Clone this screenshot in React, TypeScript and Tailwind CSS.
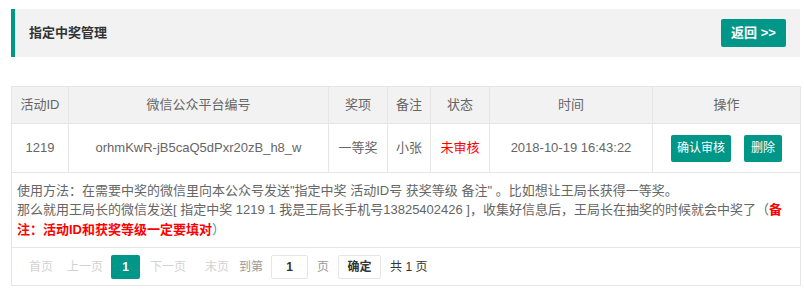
import React from 'react';

const font = { fontFamily: '"Liberation Sans", "Noto Sans CJK SC", sans-serif' };

const columns = [
  { title: '活动ID', width: 'w-[57px]' },
  { title: '微信公众平台编号', width: 'w-[260px]' },
  { title: '奖项', width: 'w-[59px]' },
  { title: '备注', width: 'w-[43px]' },
  { title: '状态', width: 'w-[59px]' },
  { title: '时间', width: 'w-[163px]' },
  { title: '操作', width: 'w-[148px]' },
];

const Pager: React.FC = () => (
  <div className="flex items-center h-[37px] pl-[17px] text-[12px] leading-none">
    <span className="text-[#d2d2d2]">首页</span>
    <span className="ml-[14px] text-[#d2d2d2]">上一页</span>
    <span className="ml-[8px] w-[29px] h-[24px] rounded-[2px] bg-[#009688] text-white font-bold flex items-center justify-center">
      1
    </span>
    <span className="ml-[10px] text-[#d2d2d2]">下一页</span>
    <span className="ml-[19px] text-[#d2d2d2]">末页</span>
    <span className="ml-[10px] text-[#999]">到第</span>
    <input
      defaultValue="1"
      className="ml-[8px] w-[37px] h-[24px] border border-[#e6e6e6] rounded-[2px] text-center text-[12px] text-[#333] font-bold outline-none"
    />
    <span className="ml-[9px] text-[#999]">页</span>
    <button className="ml-[9px] w-[43px] h-[24px] border border-[#e6e6e6] rounded-[2px] bg-white text-[#333] text-[12px] font-bold">
      确定
    </button>
    <span className="ml-[9px] text-[#333]">共 1 页</span>
  </div>
);

export default function App() {
  return (
    <div className="w-[804px] h-[290px] bg-white pt-[9px] pl-[11px] pr-[4px] overflow-hidden" style={font}>
      {/* page title bar */}
      <div className="flex items-center justify-between h-[48px] bg-[#f2f2f2] border-l-4 border-[#009688] pl-[14px] pr-[14px]">
        <h2 className="text-[13px] font-bold text-[#333]">指定中奖管理</h2>
        <button className="w-[65px] h-[28px] rounded-[2px] bg-[#009688] text-white text-[13px] font-bold">
          返回 &gt;&gt;
        </button>
      </div>

      {/* list */}
      <table className="mt-[29px] w-[789px] table-fixed border-collapse text-[13px] text-[#666]">
        <colgroup>
          {columns.map((c) => (
            <col key={c.title} className={c.width} />
          ))}
        </colgroup>
        <thead>
          <tr className="bg-[#f2f2f2] h-[37px]">
            {columns.map((c) => (
              <th key={c.title} className="border border-[#e6e6e6] font-normal text-center p-0">
                {c.title}
              </th>
            ))}
          </tr>
        </thead>
        <tbody>
          <tr className="h-[49px] text-center">
            <td className="border border-[#e6e6e6] p-0">1219</td>
            <td className="border border-[#e6e6e6] p-0">orhmKwR-jB5caQ5dPxr20zB_h8_w</td>
            <td className="border border-[#e6e6e6] p-0">一等奖</td>
            <td className="border border-[#e6e6e6] p-0">小张</td>
            <td className="border border-[#e6e6e6] p-0 text-[#f00]">未审核</td>
            <td className="border border-[#e6e6e6] p-0">2018-10-19 16:43:22</td>
            <td className="border border-[#e6e6e6] p-0">
              <div className="flex items-center justify-center gap-[13px]">
                <button className="w-[60px] h-[27px] rounded-[2px] bg-[#009688] text-white text-[12px]">确认审核</button>
                <button className="w-[38px] h-[27px] rounded-[2px] bg-[#009688] text-white text-[12px]">删除</button>
              </div>
            </td>
          </tr>
          <tr className="h-[75px]">
            <td colSpan={7} className="border border-[#e6e6e6] px-[5px] py-0 leading-[19.5px] whitespace-nowrap">
              使用方法：在需要中奖的微信里向本公众号发送"指定中奖 活动ID号 获奖等级 备注" 。比如想让王局长获得一等奖。
              <br />
              那么就用王局长的微信发送[ 指定中奖 1219 1 我是王局长手机号13825402426 ]，收集好信息后，王局长在抽奖的时候就会中奖了（
              <b className="text-[#f00]">备</b>
              <br />
              <b className="text-[#f00]">注：活动ID和获奖等级一定要填对</b>
              <span className="text-[#1e9fb5]">）</span>
            </td>
          </tr>
          <tr>
            <td colSpan={7} className="border border-[#e6e6e6] p-0">
              <Pager />
            </td>
          </tr>
        </tbody>
      </table>
    </div>
  );
}
